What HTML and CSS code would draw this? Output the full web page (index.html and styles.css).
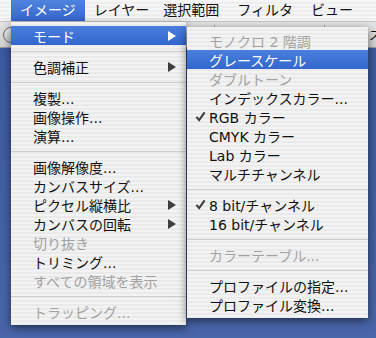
FILE: index.html
```html
<!DOCTYPE html>
<html lang="ja">
<head>
    <meta charset="UTF-8">
    <meta name="viewport" content="width=device-width, initial-scale=1.0">
    <title>イメージ メニュー</title>
    <link rel="stylesheet" href="styles.css">
</head>
<body>
    <!-- Меню сверху -->
    <div class="menubar">
        <span class="menu-title active">イメージ</span>
        <span class="menu-title">レイヤー</span>
        <span class="menu-title">選択範囲</span>
        <span class="menu-title">フィルタ</span>
        <span class="menu-title">ビュー</span>
    </div>

    <!-- Панель инструментов под меню -->
    <div class="toolbar">
        <span class="tool-round"></span>
        <span class="tool-divider first"></span>
        <span class="tool-divider second"></span>
        <span class="tool-square"></span>
        <span class="tool-label">ス</span>
    </div>

    <div class="desktop"></div>

    <!-- Меню "イメージ" -->
    <ul class="menu main-menu">
        <li class="item selected"><span class="mark"></span>モード<span class="arrow"></span></li>
        <li class="sep"></li>
        <li class="item"><span class="mark"></span>色調補正<span class="arrow"></span></li>
        <li class="sep"></li>
        <li class="item"><span class="mark"></span>複製...</li>
        <li class="item"><span class="mark"></span>画像操作...</li>
        <li class="item"><span class="mark"></span>演算...</li>
        <li class="sep"></li>
        <li class="item"><span class="mark"></span>画像解像度...</li>
        <li class="item"><span class="mark"></span>カンバスサイズ...</li>
        <li class="item"><span class="mark"></span>ピクセル縦横比<span class="arrow"></span></li>
        <li class="item"><span class="mark"></span>カンバスの回転<span class="arrow"></span></li>
        <li class="item disabled"><span class="mark"></span>切り抜き</li>
        <li class="item"><span class="mark"></span>トリミング...</li>
        <li class="item disabled"><span class="mark"></span>すべての領域を表示</li>
        <li class="sep"></li>
        <li class="item disabled"><span class="mark"></span>トラッピング...</li>
    </ul>

    <!-- Подменю "モード" -->
    <ul class="menu sub-menu">
        <li class="item disabled"><span class="mark"></span>モノクロ 2 階調</li>
        <li class="item selected"><span class="mark"></span>グレースケール</li>
        <li class="item disabled"><span class="mark"></span>ダブルトーン</li>
        <li class="item"><span class="mark"></span>インデックスカラー...</li>
        <li class="item"><span class="mark"><svg viewBox="0 0 12 12" width="11" height="11"><path d="M1.5 6.5 L4.5 10 L10.5 1.5" fill="none" stroke="#3c3c3c" stroke-width="2.2"/></svg></span>RGB カラー</li>
        <li class="item"><span class="mark"></span>CMYK カラー</li>
        <li class="item"><span class="mark"></span>Lab カラー</li>
        <li class="item"><span class="mark"></span>マルチチャンネル</li>
        <li class="sep"></li>
        <li class="item"><span class="mark"><svg viewBox="0 0 12 12" width="11" height="11"><path d="M1.5 6.5 L4.5 10 L10.5 1.5" fill="none" stroke="#3c3c3c" stroke-width="2.2"/></svg></span>8 bit/チャンネル</li>
        <li class="item"><span class="mark"></span>16 bit/チャンネル</li>
        <li class="sep"></li>
        <li class="item disabled"><span class="mark"></span>カラーテーブル...</li>
        <li class="sep"></li>
        <li class="item"><span class="mark"></span>プロファイルの指定...</li>
        <li class="item"><span class="mark"></span>プロファイル変換...</li>
    </ul>
</body>
</html>
```

FILE: styles.css
```css
    body {
        margin: 0;
        width: 376px;
        height: 338px;
        overflow: hidden;
        position: relative;
        display: flex;
        flex-direction: column;
        background-color: #4260a6;
        font-family: "DejaVu Sans", "Noto Sans CJK JP", sans-serif;
        color: #111;
    }

    /* Верхняя строка меню */
    .menubar {
        height: 22px;
        flex-shrink: 0;
        display: flex;
        padding-left: 11px;
        background: repeating-linear-gradient(to bottom, #f6f6f6 0, #f6f6f6 2px, #eeeeee 2px, #eeeeee 4px);
        border-bottom: 1px solid #c4c4c4;
        box-sizing: border-box;
    }

    .menu-title {
        padding: 0 9px;
        font-size: 14px;
        line-height: 21px;
        white-space: nowrap;
    }

    .menu-title:nth-child(3) {
        margin-left: -4px;
    }

    .menu-title.active {
        background: linear-gradient(#4f83de, #3466cd);
        color: white;
    }

    /* Панель инструментов */
    .toolbar {
        height: 26px;
        flex-shrink: 0;
        display: flex;
        align-items: center;
        overflow: hidden;
        background: linear-gradient(#e4e4e4, #d2d2d2);
        border-bottom: 1px solid #9a9a9a;
        box-sizing: border-box;
        white-space: nowrap;
    }

    .tool-round {
        width: 14px;
        height: 14px;
        margin-left: 3px;
        border: 1px solid #6a6a6a;
        border-radius: 50%;
        background: linear-gradient(#fafafa, #c8c8c8);
        flex-shrink: 0;
    }

    .tool-divider {
        width: 1px;
        height: 20px;
        background-color: #9c9c9c;
        flex-shrink: 0;
    }

    .tool-divider.first {
        margin-left: 195px;
    }

    .tool-divider.second {
        margin-left: 109px;
    }

    .tool-square {
        width: 12px;
        height: 14px;
        margin-left: 9px;
        border: 1px solid #a8a8a8;
        background-color: #ececec;
        flex-shrink: 0;
    }

    .tool-label {
        margin-left: 21px;
        font-size: 12px;
        flex-shrink: 0;
    }

    .desktop {
        flex: 1;
        background: linear-gradient(#3d5aa0, #4a66aa);
    }

    /* Выпадающие меню */
    .menu {
        position: absolute;
        margin: 0;
        padding: 4px 0;
        list-style: none;
        background: repeating-linear-gradient(to bottom, #f3f3f3 0, #f3f3f3 2px, #eaeaea 2px, #eaeaea 4px);
        box-shadow: 0 3px 9px rgba(0, 0, 0, 0.55);
        font-size: 14px;
    }

    .main-menu {
        left: 11px;
        top: 22px;
        width: 175px;
    }

    .sub-menu {
        left: 187px;
        top: 27px;
        width: 181px;
    }

    .item {
        height: 19px;
        display: flex;
        align-items: center;
        padding: 0 10px 0 8px;
        white-space: nowrap;
        color: #111;
    }

    .item .mark {
        width: 14px;
        flex-shrink: 0;
        display: flex;
        align-items: center;
    }

    .item.disabled {
        color: #a2a2a2;
    }

    .item.selected {
        background: linear-gradient(#4a7fdc, #3367cf);
        color: white;
    }

    .arrow {
        margin-left: auto;
        width: 0;
        height: 0;
        border-left: 8px solid #3e3e3e;
        border-top: 5px solid transparent;
        border-bottom: 5px solid transparent;
    }

    .item.selected .arrow {
        border-left-color: white;
    }

    .sep {
        height: 0;
        margin: 6px 0 5px;
        border-top: 1px solid #cdcdcd;
    }
```
